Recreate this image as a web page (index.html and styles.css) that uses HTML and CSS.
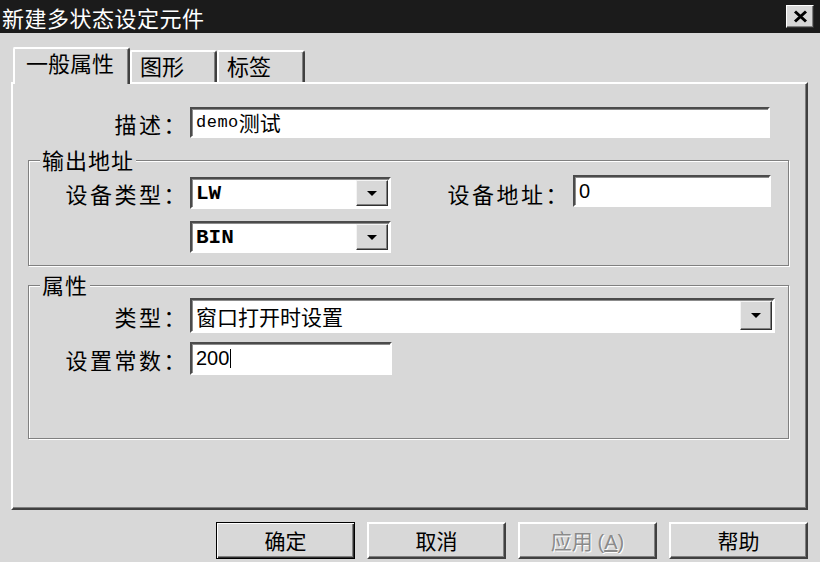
FILE: index.html
```html
<!DOCTYPE html>
<html lang="zh-CN">
<head>
<meta charset="utf-8">
<title>新建多状态设定元件</title>
<link rel="stylesheet" href="styles.css">
</head>
<body>
<div class="titlebar">
  <span class="title">新建多状态设定元件</span>
  <span class="close"><svg width="15" height="13" viewBox="0 0 15 13"><path d="M2 1.5 L13 11.5 M13 1.5 L2 11.5" stroke="#000" stroke-width="3" fill="none"/></svg></span>
</div>
<div class="tabs">
  <div class="tab active">一般属性</div>
  <div class="tab t2">图形</div>
  <div class="tab t3">标签</div>
</div>
<div class="panel">
  <div class="desc-row">
    <span class="lbl">描述：</span>
    <div class="field desc"><span class="mono">demo</span><span class="cjk">测试</span></div>
  </div>
  <div class="group group-out">
    <span class="legend">输出地址</span>
    <div class="grid-out">
      <span class="lbl">设备类型：</span>
      <div class="combo"><span class="val monob">LW</span><span class="drop"><i class="arrow"></i></span></div>
      <span class="lbl lbl-addr">设备地址：</span>
      <div class="field addr"><span class="num">0</span></div>
      <span></span>
      <div class="combo"><span class="val monob">BIN</span><span class="drop"><i class="arrow"></i></span></div>
    </div>
  </div>
  <div class="group group-attr">
    <span class="legend">属性</span>
    <div class="grid-attr">
      <span class="lbl">类型：</span>
      <div class="combo wide"><span class="val">窗口打开时设置</span><span class="drop"><i class="arrow"></i></span></div>
      <span class="lbl">设置常数：</span>
      <div class="field const"><span class="num">200</span><span class="caret"></span></div>
    </div>
  </div>
</div>
<div class="buttons">
  <div class="btn default">确定</div>
  <div class="btn">取消</div>
  <div class="btn disabled">应用 <span class="paren">(<u>A</u>)</span></div>
  <div class="btn">帮助</div>
</div>
</body>
</html>
```
FILE: styles.css
```css
* { box-sizing: border-box; }
html, body { margin: 0; padding: 0; }
body {
  width: 820px;
  height: 562px;
  overflow: hidden;
  background: #d8d8d8;
  color: #000;
  font-family: "Noto Sans CJK SC", sans-serif;
  font-size: 21px;
}

/* title bar */
.titlebar {
  height: 33px;
  background: #1b1b1b;
  color: #fff;
  display: flex;
  align-items: center;
  justify-content: space-between;
  padding: 0 6px 0 2px;
}
.title { font-size: 22px; line-height: 1; letter-spacing: 0.5px; }
.close {
  width: 28px;
  height: 23px;
  background: #d8d8d8;
  border: 1px solid;
  border-color: #fff #303030 #303030 #fff;
  box-shadow: inset -1px -1px 0 #808080;
  display: flex;
  align-items: center;
  justify-content: center;
}
.close svg { display: block; }

/* tabs */
.tabs {
  display: flex;
  align-items: flex-end;
  height: 35px;
  margin-top: 14px;
  padding-left: 13px;
}
.tab {
  height: 32px;
  border-top: 2px solid #fff;
  border-left: 2px solid #fff;
  border-right: 2px solid #404040;
  border-radius: 2px 3px 0 0;
  box-shadow: inset -1px 0 0 #808080;
  padding-left: 8px;
  font-size: 22px;
  line-height: 26px;
}
.tab.active {
  width: 117px;
  height: 37px;
  margin-bottom: -2px;
  position: relative;
  z-index: 1;
  background: #d8d8d8;
  padding-left: 11px;
}
.tab.t2 { width: 87px; }
.tab.t3 { width: 88px; }

/* panel */
.panel {
  margin-left: 11px;
  width: 797px;
  height: 428px;
  border: 2px solid;
  border-color: #fff #404040 #404040 #fff;
  box-shadow: inset -1px -1px 0 #808080;
  padding: 23px 16px 0 15px;
}

.lbl {
  text-align: right;
  padding-right: 2px;
  font-size: 22px;
  letter-spacing: 2.5px;
  line-height: 30px;
  white-space: nowrap;
}

.field {
  background: #fff;
  border: 2px solid;
  border-color: #4b4b4b #fff #fff #4b4b4b;
  box-shadow: inset 1px 1px 0 #8c8c8c;
  display: flex;
  align-items: center;
  padding-left: 4px;
  white-space: nowrap;
}

.desc-row {
  display: grid;
  grid-template-columns: 162px 580px;
  align-items: center;
}
.desc { height: 31px; }
.mono { font-family: "Liberation Mono", monospace; font-size: 17px; letter-spacing: 0.5px; }
.cjk { font-size: 21px; line-height: 1; }
.monob { font-family: "Liberation Mono", monospace; font-weight: bold; font-size: 19px; }
.num { font-family: "Liberation Sans", sans-serif; font-size: 20px; }
.caret { width: 1px; height: 19px; background: #000; margin-left: 1px; }

/* group boxes */
.group {
  position: relative;
  border: 1px solid #808080;
  box-shadow: inset 1px 1px 0 #fff, 1px 1px 0 #fff;
  margin-right: 1px;
}
.legend {
  position: absolute;
  left: 11px;
  top: -14px;
  padding: 0 2px;
  background: #d8d8d8;
  font-size: 22px;
  letter-spacing: 1px;
  line-height: 24px;
}
.group-out {
  margin-top: 22px;
  height: 106px;
  padding-top: 16px;
}
.grid-out {
  display: grid;
  grid-template-columns: 161px 201px 1fr 198px;
  grid-template-rows: 32px 32px;
  row-gap: 12px;
  align-items: center;
  padding-right: 17px;
}
.lbl-addr { padding-right: 3px; }
.addr { height: 32px; margin-top: -4px; }

.group-attr {
  margin-top: 19px;
  height: 154px;
  padding-top: 12px;
}
.grid-attr {
  display: grid;
  grid-template-columns: 161px 585px;
  grid-template-rows: 35px 33px;
  row-gap: 9px;
  align-items: center;
}
.const { width: 202px; height: 33px; }

/* combo boxes */
.combo {
  height: 32px;
  background: #fff;
  border: 2px solid;
  border-color: #4b4b4b #fff #fff #4b4b4b;
  box-shadow: inset 1px 1px 0 #8c8c8c;
  display: flex;
  padding: 1px 1px 1px 0;
}
.combo.wide { height: 35px; }
.val {
  flex: 1;
  display: flex;
  align-items: center;
  padding-left: 4px;
  font-size: 21px;
  white-space: nowrap;
}
.drop {
  width: 32px;
  background: #d8d8d8;
  border: 1px solid;
  border-color: #f4f4f4 #303030 #303030 #f4f4f4;
  box-shadow: inset -1px -1px 0 #808080;
  display: flex;
  align-items: center;
  justify-content: center;
}
.arrow {
  width: 0;
  height: 0;
  border-left: 5px solid transparent;
  border-right: 5px solid transparent;
  border-top: 5px solid #000;
}

/* buttons */
.buttons {
  display: flex;
  justify-content: flex-end;
  gap: 12px;
  margin-top: 12px;
  padding-right: 12px;
}
.btn {
  width: 139px;
  height: 37px;
  border: 2px solid;
  border-color: #fff #404040 #404040 #fff;
  box-shadow: inset -1px -1px 0 #808080;
  text-align: center;
  font-size: 21px;
  line-height: 32px;
}
.btn.default {
  border: 1px solid #000;
  box-shadow: inset 1px 1px 0 #fff, inset -1px -1px 0 #303030, inset -2px -2px 0 #808080;
  line-height: 34px;
}
.btn.disabled {
  color: #8a8a8a;
  text-shadow: 1px 1px 0 #fff;
}
.paren { font-family: "Liberation Sans", sans-serif; font-size: 20px; }
```
